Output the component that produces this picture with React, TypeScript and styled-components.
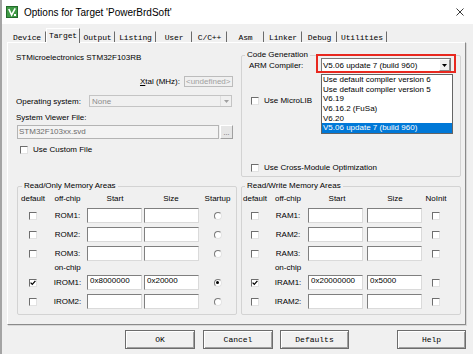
import React from 'react';
import styled, { createGlobalStyle } from 'styled-components';

const GlobalStyle = createGlobalStyle`
  html, body { margin: 0; padding: 0; background: #f0f0f0; }
  body {
    font-family: "Liberation Sans", Arial, sans-serif;
    font-size: 8px;
    color: #000;
  }
  * { box-sizing: border-box; }
`;

const tabs = [
  { name: 'Device', w: 38 },
  { name: 'Target', w: 34, active: true },
  { name: 'Output', w: 35 },
  { name: 'Listing', w: 41 },
  { name: 'User', w: 36 },
  { name: 'C/C++', w: 35 },
  { name: 'Asm', w: 37 },
  { name: 'Linker', w: 38 },
  { name: 'Debug', w: 35 },
  { name: 'Utilities', w: 50 },
];

const compilers = [
  'Use default compiler version 6',
  'Use default compiler version 5',
  'V6.19',
  'V6.16.2 (FuSa)',
  'V6.20',
  'V5.06 update 7 (build 960)',
];

type MemRow = { label: string; start?: string; size?: string; def?: boolean; last?: boolean };

const romRows: MemRow[] = [
  { label: 'ROM1:' },
  { label: 'ROM2:' },
  { label: 'ROM3:' },
  { label: 'IROM1:', start: '0x8000000', size: '0x20000', def: true, last: true },
  { label: 'IROM2:' },
];

const ramRows: MemRow[] = [
  { label: 'RAM1:' },
  { label: 'RAM2:' },
  { label: 'RAM3:' },
  { label: 'IRAM1:', start: '0x20000000', size: '0x5000', def: true },
  { label: 'IRAM2:' },
];

const Check = ({ checked }: { checked?: boolean }) => (
  <CheckBox>
    {checked && (
      <svg width="6" height="6" viewBox="0 0 6 6">
        <path d="M0.6 2.6 L2.3 4.4 L5.4 0.9" stroke="#000" strokeWidth="1.3" fill="none" />
      </svg>
    )}
  </CheckBox>
);

const MemoryGroup = ({
  title,
  rows,
  cols,
  lastHead,
  radio,
  indent,
}: {
  title: string;
  rows: MemRow[];
  cols: string;
  lastHead: string;
  radio?: boolean;
  indent: number;
}) => {
  const renderRow = (r: MemRow) => (
    <React.Fragment key={r.label}>
      <Center><Check checked={r.def} /></Center>
      <MemLabel>{r.label}</MemLabel>
      <MemInput>{r.start}</MemInput>
      <MemInput $shift={1}>{r.size}</MemInput>
      <Center>{radio ? <Radio $on={r.last} /> : <Check />}</Center>
    </React.Fragment>
  );

  return (
    <GroupBox>
      <Legend $indent={indent}>{title}</Legend>
      <MemGrid $cols={cols}>
        <Head>default</Head>
        <Head>off-chip</Head>
        <Head>Start</Head>
        <Head>Size</Head>
        <Head>{lastHead}</Head>
        {rows.slice(0, 3).map(renderRow)}
        <span />
        <MemLabel>on-chip</MemLabel>
        <span />
        <span />
        <span />
        {rows.slice(3).map(renderRow)}
      </MemGrid>
    </GroupBox>
  );
};

export default function App() {
  return (
    <>
      <GlobalStyle />
      <Window>
        <TitleBar>
          <svg width="12" height="12" viewBox="0 0 12 12">
            <rect x="0.5" y="0.5" width="11" height="11" fill="#3f9a45" stroke="#236b2b" />
            <path d="M2.8 3 L5.6 9 L9.2 2.4" stroke="#fff" strokeWidth="1.6" fill="none" />
            <rect x="8" y="8" width="2" height="2" fill="#fff" />
          </svg>
          <Title>Options for Target 'PowerBrdSoft'</Title>
          <CloseIcon width="8" height="8" viewBox="0 0 8 8">
            <path d="M0.5 0.5 L7.5 7.5 M7.5 0.5 L0.5 7.5" stroke="#222" strokeWidth="0.9" />
          </CloseIcon>
        </TitleBar>

        <Body>
          <TabRow>
            {tabs.map((t) => (
              <Tab key={t.name} $w={t.w} $active={t.active}>{t.name}</Tab>
            ))}
          </TabRow>

          <Panel>
            <TopSection>
              <DeviceColumn>
                <DeviceName>STMicroelectronics STM32F103RB</DeviceName>
                <XtalRow>
                  <span><u>X</u>tal (MHz):</span>
                  <DisabledBox $w={49}>&lt;undefined&gt;</DisabledBox>
                </XtalRow>
                <OsRow>
                  <OsLabel>Operating system:</OsLabel>
                  <DisabledSelect>
                    <DisabledText>None</DisabledText>
                    <DisabledArrow>
                      <svg width="5" height="3" viewBox="0 0 5 3"><path d="M0 0 H5 L2.5 3 Z" fill="#a0a0a0" /></svg>
                    </DisabledArrow>
                  </DisabledSelect>
                </OsRow>
                <FieldLabel>System Viewer File:</FieldLabel>
                <SvdRow>
                  <SvdInput>STM32F103xx.svd</SvdInput>
                  <DotsButton>...</DotsButton>
                </SvdRow>
                <CheckRow $left={4}>
                  <Check />
                  <span>Use Custom File</span>
                </CheckRow>
              </DeviceColumn>

              <CodeGenBox>
                <Legend $indent={3}>Code Generation</Legend>
                <CompilerRow>
                  <CompilerLabel>ARM Compiler:</CompilerLabel>
                  <Highlight>
                    <ComboBox>
                      <ComboText>V5.06 update 7 (build 960)</ComboText>
                      <ComboArrow>
                        <svg width="5" height="3" viewBox="0 0 5 3"><path d="M0 0 H5 L2.5 3 Z" fill="#000" /></svg>
                      </ComboArrow>
                    </ComboBox>
                    <DropList>
                      {compilers.map((c, i) => (
                        <DropItem key={c} $selected={i === compilers.length - 1}>{c}</DropItem>
                      ))}
                    </DropList>
                  </Highlight>
                </CompilerRow>
                <CheckRow $left={9} $top={25}>
                  <Check />
                  <span>Use MicroLIB</span>
                </CheckRow>
                <CheckRow $left={9} $top={59}>
                  <Check />
                  <span>Use Cross-Module Optimization</span>
                </CheckRow>
              </CodeGenBox>
            </TopSection>

            <BottomSection>
              <MemoryGroup
                title="Read/Only Memory Areas"
                rows={romRows}
                cols="30px 39px 56px 56px 37px"
                lastHead="Startup"
                radio
                indent={4}
              />
              <MemoryGroup
                title="Read/Write Memory Areas"
                rows={ramRows}
                cols="26px 40px 58px 58px 24px"
                lastHead="NoInit"
                indent={3}
              />
            </BottomSection>
          </Panel>

          <ButtonRow>
            <DialogButton $w={70}>OK</DialogButton>
            <DialogButton $w={70}>Cancel</DialogButton>
            <DialogButton $w={69}>Defaults</DialogButton>
            <DialogButton $w={69} $push>Help</DialogButton>
          </ButtonRow>
        </Body>
      </Window>
    </>
  );
}

const Window = styled.div`
  width: 473px;
  height: 354px;
  border-left: 2px solid #a4a4a4;
  display: flex;
  flex-direction: column;
  overflow: hidden;
  background: #f0f0f0;
`;

const TitleBar = styled.div`
  height: 24px;
  background: #fff;
  display: flex;
  align-items: center;
  padding-left: 4px;
  flex-shrink: 0;
`;

const Title = styled.span`
  margin-left: 6px;
  font-size: 10px;
  color: #000;
`;

const CloseIcon = styled.svg`
  margin-left: auto;
  margin-right: 9px;
`;

const Body = styled.div`
  flex: 1;
  display: flex;
  flex-direction: column;
  padding: 4px 7px 0 5px;
`;

const TabRow = styled.div`
  display: flex;
  align-items: flex-end;
  height: 14px;
  padding-left: 1px;
  position: relative;
  z-index: 1;
`;

const Tab = styled.div<{ $w: number; $active?: boolean }>`
  width: ${(p) => p.$w}px;
  height: ${(p) => (p.$active ? 15 : 11)}px;
  margin-bottom: ${(p) => (p.$active ? -1 : 0)}px;
  display: flex;
  align-items: center;
  justify-content: center;
  font-family: "Liberation Mono", "DejaVu Sans Mono", monospace;
  font-size: 8px;
  letter-spacing: -0.15px;
  background: #f0f0f0;
  border-top: 1px solid ${(p) => (p.$active ? '#fff' : 'transparent')};
  border-left: 1px solid ${(p) => (p.$active ? '#fff' : 'transparent')};
  border-right: 1px solid #6b6b6b;
  padding-bottom: ${(p) => (p.$active ? 2 : 0)}px;
`;

const Panel = styled.div`
  height: 283px;
  border: 1px solid;
  border-color: #fff #8a8a8a #8a8a8a #fff;
  box-shadow: 1px 1px 0 #d8d8d8;
  padding: 0 4px 0 8px;
  display: flex;
  flex-direction: column;
`;

const TopSection = styled.div`
  display: flex;
  align-items: flex-start;
  height: 135px;
`;

const DeviceColumn = styled.div`
  width: 218px;
  display: flex;
  flex-direction: column;
`;

const DeviceName = styled.div`
  margin-top: 10px;
  line-height: 10px;
`;

const XtalRow = styled.div`
  margin-top: 13px;
  height: 11px;
  display: flex;
  align-items: center;
  justify-content: flex-end;
  gap: 4px;
  padding-right: 1px;
  color: #000;
  u { text-decoration: underline; }
`;

const DisabledBox = styled.div<{ $w: number }>`
  width: ${(p) => p.$w}px;
  height: 11px;
  border: 1px solid #bcbcbc;
  background: #f0f0f0;
  color: #a0a0a0;
  line-height: 9px;
  padding-left: 1px;
`;

const OsRow = styled.div`
  margin-top: 8px;
  height: 12px;
  display: flex;
  align-items: center;
`;

const OsLabel = styled.span`
  width: 73px;
`;

const DisabledSelect = styled.div`
  width: 143px;
  height: 12px;
  border: 1px solid #c4c4c4;
  background: #f0f0f0;
  display: flex;
  align-items: center;
`;

const DisabledText = styled.span`
  flex: 1;
  color: #8c8c8c;
  padding-left: 2px;
`;

const DisabledArrow = styled.div`
  width: 11px;
  height: 10px;
  margin-right: 0;
  border-left: 1px solid #dedede;
  display: flex;
  align-items: center;
  justify-content: center;
`;

const FieldLabel = styled.div`
  margin-top: 6px;
  line-height: 10px;
`;

const SvdRow = styled.div`
  margin-top: 2px;
  height: 14px;
  display: flex;
  gap: 1px;
  padding-left: 1px;
`;

const SvdInput = styled.div`
  width: 202px;
  border: 1px solid #b4b4b4;
  background: #f3f3f3;
  color: #6d6d6d;
  line-height: 12px;
  padding-left: 1px;
`;

const DotsButton = styled.div`
  width: 13px;
  border: 1px solid;
  border-color: #fff #a0a0a0 #a0a0a0 #fff;
  background: #e6e6e6;
  color: #555;
  text-align: center;
  line-height: 14px;
  font-size: 7px;
`;

const CheckRow = styled.div<{ $left: number; $top?: number }>`
  margin-top: ${(p) => p.$top ?? 7}px;
  height: 8px;
  display: flex;
  align-items: center;
  gap: 5px;
  padding-left: ${(p) => p.$left}px;
  line-height: 10px;
`;

const CheckBox = styled.span`
  width: 8px;
  height: 8px;
  flex-shrink: 0;
  background: #fff;
  border: 1px solid;
  border-color: #6e6e6e #e2e2e2 #e2e2e2 #6e6e6e;
  display: inline-flex;
  align-items: center;
  justify-content: center;
`;

const Radio = styled.span<{ $on?: boolean }>`
  width: 8px;
  height: 8px;
  border-radius: 50%;
  background: #fff;
  border: 1px solid;
  border-color: #7a7a7a #e4e4e4 #e4e4e4 #7a7a7a;
  display: inline-flex;
  align-items: center;
  justify-content: center;
  &::after {
    content: '';
    width: 3px;
    height: 3px;
    border-radius: 50%;
    background: ${(p) => (p.$on ? '#000' : 'transparent')};
  }
`;

const GroupBox = styled.div`
  width: 220px;
  border: 1px solid #d3d3d3;
  border-radius: 2px;
`;

const CodeGenBox = styled(GroupBox)`
  margin-left: 7px;
  margin-top: 12px;
  padding-bottom: 4px;
`;

const Legend = styled.div<{ $indent: number }>`
  width: fit-content;
  margin: -6px 0 0 ${(p) => p.$indent}px;
  padding: 0 2px;
  line-height: 10px;
  background: #f0f0f0;
`;

const CompilerRow = styled.div`
  margin-top: -2px;
  height: 14px;
  display: flex;
  align-items: center;
  padding-left: 7px;
`;

const CompilerLabel = styled.span`
  width: 72px;
`;

const Highlight = styled.div`
  position: relative;
  &::before {
    content: '';
    position: absolute;
    top: -4px;
    bottom: -1px;
    left: -5px;
    right: -5px;
    border: 2px solid #e8281f;
    pointer-events: none;
  }
`;

const ComboBox = styled.div`
  width: 130px;
  height: 14px;
  border: 1px solid #7a7a7a;
  background: #fff;
  display: flex;
  align-items: center;
`;

const ComboText = styled.span`
  flex: 1;
  padding-left: 1px;
`;

const ComboArrow = styled.div`
  width: 11px;
  height: 12px;
  background: #f0f0f0;
  border: 1px solid;
  border-color: #fff #8a8a8a #8a8a8a #fff;
  display: flex;
  align-items: center;
  justify-content: center;
`;

const DropList = styled.div`
  position: absolute;
  top: 16px;
  left: 0;
  width: 132px;
  border: 1px solid #646464;
  background: #fff;
  z-index: 2;
`;

const DropItem = styled.div<{ $selected?: boolean }>`
  height: 9.7px;
  line-height: 9.7px;
  padding-left: 1px;
  background: ${(p) => (p.$selected ? '#0078d7' : '#fff')};
  color: ${(p) => (p.$selected ? '#fff' : '#000')};
  white-space: nowrap;
`;

const BottomSection = styled.div`
  margin-top: 8px;
  display: flex;
  gap: 4px;
  padding-left: 1px;
`;

const MemGrid = styled.div<{ $cols: string }>`
  display: grid;
  grid-template-columns: ${(p) => p.$cols};
  grid-template-rows: 15px 19px 19px 19px 10px 19px 19px;
  align-items: center;
  padding-bottom: 3px;
`;

const Head = styled.span`
  text-align: center;
  line-height: 10px;
  white-space: nowrap;
`;

const Center = styled.div`
  display: flex;
  justify-content: center;
`;

const MemLabel = styled.span`
  text-align: center;
  line-height: 10px;
  white-space: nowrap;
`;

const MemInput = styled.div<{ $shift?: number }>`
  width: 55px;
  height: 15px;
  margin-left: ${(p) => p.$shift ?? 0}px;
  background: #fff;
  border: 1px solid;
  border-color: #7f7f7f #dadada #dadada #7f7f7f;
  padding-left: 2px;
  line-height: 10px;
`;

const ButtonRow = styled.div`
  margin-top: 5px;
  height: 19px;
  display: flex;
  gap: 7px;
  padding-left: 118px;
`;

const DialogButton = styled.div<{ $w: number; $push?: boolean }>`
  width: ${(p) => p.$w}px;
  height: 19px;
  margin-left: ${(p) => (p.$push ? 'auto' : '0')};
  border: 1px solid #6c6c6c;
  box-shadow: inset 1px 1px 0 #fff, inset -1px -1px 0 #a0a0a0;
  background: #f0f0f0;
  font-family: "Liberation Mono", "DejaVu Sans Mono", monospace;
  font-size: 8px;
  display: flex;
  align-items: center;
  justify-content: center;
  &:first-child { margin-right: 1px; }
`;
